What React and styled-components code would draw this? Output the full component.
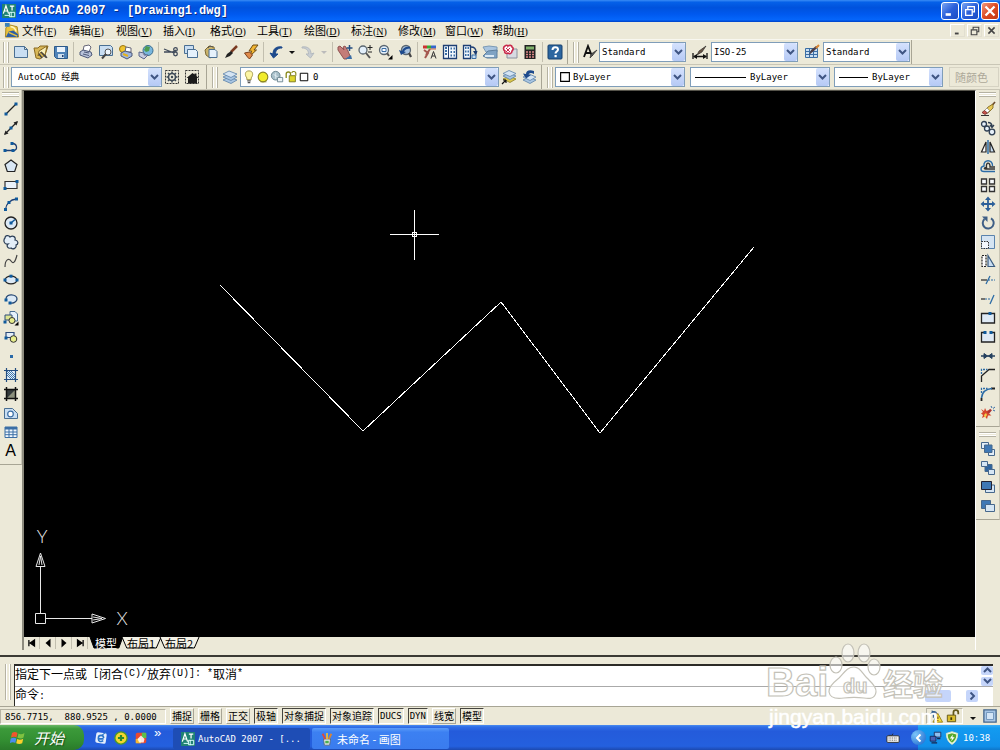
import React, { useState } from 'react';
import styled, { createGlobalStyle, css } from 'styled-components';

const MONO = '"DejaVu Sans Mono", "Noto Sans CJK SC", monospace';
const CJK = '"Liberation Mono", "Noto Sans CJK SC", monospace';

const GlobalStyle = createGlobalStyle`
  * {
    box-sizing: border-box;
  }
  body {
    margin: 0;
    background: #ece9d8;
    color: #000;
    font: 11px/14px ${CJK};
  }
  button, input, select {
    font: inherit;
    color: inherit;
    margin: 0;
    padding: 0;
    border: 0;
    background: none;
    border-radius: 0;
  }
`;

/* ---------- icons, all on a 16 x 16 grid ---------- */

const navy = '#1d3e73';
const steel = '#3b6ea5';
const pale = '#c9def2';

const line = { fill: 'none', stroke: navy, strokeWidth: 1.3 };
const thin = { fill: 'none', stroke: '#333', strokeWidth: 1 };

const dot = (x, y) => <rect x={x - 1.5} y={y - 1.5} width="3" height="3" fill="#0f5a9c" />;

const icons = {
  newFile: <path d="M1.5 2.5h10l3 3v8h-13z M11.5 2.5v3h3" fill={pale} stroke="#4a6f92" />,
  open: (
    <g>
      <path d="M1 4h4l2-2h8l-3 9-5 4-4-1z" fill="#d9b857" stroke="#8a6a22" />
      <path d="M5 12l1-5 8-5-2 9-4-3z" fill="#f9efb8" stroke="#8a6a22" />
      <path d="M8 8l5 5.500M6 10l3 4M12 11l2 3" stroke="#444" strokeWidth="1.300" />
    </g>
  ),
  save: (
    <g>
      <path d="M1.5 2.5h13v12h-11l-2-2z" fill="#4f83b8" stroke="#2d5a8a" />
      <path d="M4 3h8v5H4z" fill="#eaf3fb" />
      <path d="M5 10h6v4H5z" fill="#cfe0ef" />
      <path d="M9 11h1.500v2H9z" fill={navy} />
    </g>
  ),
  print: (
    <g>
      <path d="M5 7l1-5 5-1 2 2-2 5z" fill="#fff" stroke="#667" />
      <path d="M2 8l3-2 8 2 1 3-4 3-8-3z" fill="#b9c3da" stroke="#4d5878" />
      <path d="M5 10l6 1.500M6 8l5 1" stroke="#4d5878" />
    </g>
  ),
  preview: (
    <g>
      <path d="M1.5 1.500h11l2 2v8h-13z" fill={pale} stroke="#4a6f92" />
      <circle cx="10" cy="8" r="3" fill="#eef6fd" stroke="#555" />
      <path d="M8 10l-4 4.500" stroke="#444" strokeWidth="2" />
    </g>
  ),
  publish: (
    <g>
      <circle cx="5" cy="5" r="3.500" fill="#f0c42d" stroke="#9a7413" />
      <path d="M8 3l5 1v4l-6 0z" fill="#fff" stroke="#667" />
      <path d="M3 9l4-2 7 2v3l-5 3-6-3z" fill="#9fb5dc" stroke="#4d5878" />
      <path d="M5 10l5 2" stroke="#e4b21c" strokeWidth="2" />
    </g>
  ),
  globe: (
    <g>
      <circle cx="10" cy="6.500" r="5" fill="#79b6dd" stroke="#3b6d8f" />
      <path d="M8 2l4 1-1 4-3 1-2-2z" fill="#4d9c50" />
      <path d="M1 8l5 1v2l4 0-4 4-5-3z" fill="#c6cbe0" stroke="#5d678a" />
    </g>
  ),
  cut: (
    <g stroke="#3f4a5a" fill="none" strokeWidth="1.300">
      <path d="M1 5l10 4M1 8h9l3-2" />
      <circle cx="12.500" cy="5.500" r="1.800" />
      <circle cx="12.500" cy="10" r="1.800" />
    </g>
  ),
  copyClip: (
    <g fill={pale} stroke="#4a6f92">
      <path d="M1.500 1.500h9v8h-9z" />
      <path d="M4.500 5.500h8l2 2v6h-10z" fill="#e5f1fb" />
    </g>
  ),
  paste: (
    <g>
      <path d="M2 6l4-4 5 1 1 8-5 3-4-3z" fill="#c9b26b" stroke="#7d6a33" />
      <path d="M6 5.500h6l2 2v6H6z" fill="#e5f1fb" stroke="#4a6f92" />
      <path d="M5 4l2-2 3 1" stroke="#555" fill="none" />
    </g>
  ),
  brush: (
    <g>
      <path d="M14 2L8 8" stroke="#7a3b22" strokeWidth="2.500" />
      <path d="M8 7l2 2-3 3-5 2 2-4z" fill="#222" />
    </g>
  ),
  matchProp: (
    <g>
      <path d="M10 1l5 0-4 5 2.500 0L7 12l1.500-5H6z" fill="#f2b632" stroke="#6c4a12" />
      <path d="M1.500 9l5-1 3 3-3 4-2-2z" fill="#e08a4a" stroke="#7a3f1b" />
    </g>
  ),
  undo: <path d="M14 3C8 2 5 5 5 10l-3-1 3.500 5L10 10 7.500 10C7.500 6 10 4 14 4z" fill="#1d4a8c" stroke="#1d4a8c" />,
  redo: <path d="M2 3c6-1 9 2 9 7l3-1-3.500 5L6 10l2.500 0C8.500 6 6 4 2 4z" fill="#c8cdd2" stroke="#b4babf" />,
  pan: (
    <g>
      <path d="M1 3l2-1 4 4-1-3 2-1 3 5 2 5-3 3H7L1 6z" fill="#c47c78" stroke="#8f5351" />
      <path d="M12.500 1v6M9.500 4h6" stroke="#234d80" strokeWidth="1.500" />
      <path d="M8 15l6-4 1 4z" fill={steel} />
    </g>
  ),
  zoomRt: (
    <g>
      <circle cx="6" cy="6" r="4" fill="#e3effa" stroke="#5a6670" strokeWidth="1.300" />
      <path d="M9 9l4 5" stroke="#555" strokeWidth="2" />
      <path d="M13 1v5M10.500 3.500h5M11 8h4" stroke="#222" />
    </g>
  ),
  zoomWin: (
    <g>
      <circle cx="7" cy="6" r="4.500" fill="#e3effa" stroke="#5a6670" strokeWidth="1.300" />
      <path d="M5 4.500h4v3H5z" fill="#fff" stroke={steel} />
      <path d="M10 9l2 3" stroke="#555" strokeWidth="2" />
      <path d="M15.500 11v4.500H11z" fill="#000" />
    </g>
  ),
  zoomPrev: (
    <g>
      <circle cx="9" cy="6" r="4.500" fill="#a9c3df" stroke="#5a6670" strokeWidth="1.300" />
      <path d="M12 9l2 4" stroke="#444" strokeWidth="2.200" />
      <path d="M13 3C9 2 6 4 5 7L2 6l2 5 5-3-2-.5c1-2 3-3 6-3z" fill="#1d4a8c" />
    </g>
  ),
  properties: (
    <g>
      <path d="M1 1.500h4v3H1z" fill="#c33" />
      <path d="M5 1.500h4v3H5z" fill="#3a3" />
      <path d="M9 1.500h5v3H9z" fill="#36c" />
      <path d="M2 6l4 3-3 5M8 5l-4 6" stroke="#a4574e" strokeWidth="2" fill="none" />
      <path d="M9 14.500l2.500-7 2.500 7M10 12h3" stroke="#333" fill="none" />
      <path d="M8 5h6" stroke="#c64" />
    </g>
  ),
  designCenter: (
    <g>
      <path d="M1.500 1.500h13v13h-13z" fill="#f3f8fd" stroke={navy} strokeWidth="1.300" />
      <path d="M6.500 2v12" stroke={navy} />
      <path d="M3 4h2M3 7h2M3 10h2M8.500 4.500h1.500M11.500 4.500H13M8.500 8h1.500M11.500 8H13M8.500 11.500h1.500M11.500 11.500H13" stroke={steel} strokeWidth="2" />
    </g>
  ),
  toolPalettes: (
    <g>
      <path d="M1.500 1.500h7v13h-7z" fill="#f3f8fd" stroke={navy} strokeWidth="1.300" />
      <path d="M3 4h1.500M5.500 4H7M3 7.500h1.500M5.500 7.500H7M3 11h1.500M5.500 11H7" stroke={steel} strokeWidth="2" />
      <path d="M9 3c3 0 5 2 5 5" {...line} />
      <path d="M11 7l3 5 1.500-5z" fill={navy} />
      <path d="M10 11h4v3.500h-4z" fill={pale} stroke={steel} />
    </g>
  ),
  sheetSet: (
    <g>
      <path d="M1 3l6-1 8 1v5H4z" fill="#a9c5e0" stroke="#7b9ab5" />
      <path d="M1 12l5-5 9-1v8H5z" fill="#7fa3c4" stroke="#5f7f9d" />
      <path d="M3 12h9" stroke="#dceaf5" strokeWidth="2" />
    </g>
  ),
  markup: (
    <g>
      <path d="M5 5h10v9H5z" fill="#d7dbe2" stroke="#8a919d" />
      <path d="M3 2c1-1 3-1 3 0 1-1 4-1 4 1 2 1 1 3 0 4 0 3-3 3-4 2-2 1-4 0-3-2-2-1-2-4 0-5z" fill="#fff" stroke="#c92a4b" strokeWidth="1.600" />
      <path d="M4 4l4 4M8 4L4 8" stroke="#c92a4b" />
    </g>
  ),
  calc: (
    <g>
      <path d="M2.500 1h11v14h-11z" fill="#222" />
      <path d="M4 2.500h8v3H4z" fill="#7fb06a" />
      <path d="M4 8h8M4 10.500h8M4 13h8" stroke="#d88" strokeWidth="1.300" strokeDasharray="2 1" />
    </g>
  ),
  help: (
    <g>
      <rect x="1" y="1" width="14" height="14" rx="1" fill="#2c66a0" stroke="#17406e" />
      <path d="M5.500 6c0-4 5.500-3.500 5.500-.5 0 2-2.500 2-2.500 4" fill="none" stroke="#fff" strokeWidth="2" />
      <rect x="7.500" y="11" width="2.200" height="2.200" fill="#fff" />
    </g>
  ),
  textStyle: (
    <g>
      <path d="M2 13L6 2l4 10M3.500 9h5" fill="none" stroke="#111" strokeWidth="1.800" />
      <path d="M15 6l-4 5-3 3 1-4z" fill="#555" stroke="#222" strokeWidth=".6" />
    </g>
  ),
  dimStyle: (
    <g>
      <path d="M1 9v6M15 9v6M2 12.500h12" stroke="#111" strokeWidth="1.300" />
      <path d="M5 10l-4 2.500L5 15zM11 10l4 2.500-4 2.500z" fill="#111" />
      <path d="M14 2l-4 6-5 3 2-4z" fill="#6a5646" stroke="#222" strokeWidth=".6" />
    </g>
  ),
  tableStyle: (
    <g>
      <path d="M1.500 4.500h12v9h-12z" fill={pale} stroke={steel} />
      <path d="M1.500 7.500h12M1.500 10.500h12M5.500 4.500v9M9.500 4.500v9" stroke={steel} />
      <path d="M15 2l-4 4-6 5 2-5 5-4z" fill="#4b3f4a" />
      <path d="M15 1l-3 3" stroke="#d98633" strokeWidth="2" />
    </g>
  ),
  gear: (
    <g>
      <rect x="1.500" y="1.500" width="13" height="13" {...thin} strokeDasharray="2 1" />
      <circle cx="8" cy="8" r="3.500" fill="none" stroke="#3d4a57" strokeWidth="1.600" />
      <path d="M8 2.500v2M8 11.500v2M2.500 8h2M11.500 8h2M4 4l1.500 1.500M10.500 10.500L12 12M12 4l-1.500 1.500M5.500 10.500L4 12" stroke="#3d4a57" strokeWidth="1.500" />
      <circle cx="8" cy="8" r="1.200" fill="#3d4a57" />
    </g>
  ),
  home: (
    <g>
      <rect x="1.500" y="1.500" width="13" height="13" {...thin} strokeDasharray="2 1" />
      <path d="M2.500 9L8.500 4l2 1.500V4.500h2V7l2 2-1.500 0v5.500H4V9z" fill="#1a1a1a" />
    </g>
  ),
  layers: (
    <g fill="#a9c6e2" stroke="#5c82a8" strokeWidth=".8">
      <path d="M1 11l6-3 8 3-6 3.500z" />
      <path d="M1 8l6-3 8 3-6 3.500z" />
      <path d="M1 5l6-3 8 3-6 3.500z" fill="#d4e4f3" />
    </g>
  ),
  layerState: (
    <g strokeWidth=".8">
      <path d="M2 10l6-3 7 3-6 3.500z" fill="#d9c64c" stroke="#8b7d28" />
      <path d="M2 7l6-3 7 3-6 3.500z" fill="#a9c6e2" stroke="#5c82a8" />
      <path d="M2 4.500l6-3 7 3-6 3z" fill="#d4e4f3" stroke="#5c82a8" />
      <path d="M1 15l4-4M5 11v3M5 11H2" stroke="#111" strokeWidth="1.200" fill="none" />
    </g>
  ),
  layerPrev: (
    <g strokeWidth=".8">
      <path d="M2 11l6-3 7 3-6 3.500z" fill="#a9c6e2" stroke="#5c82a8" />
      <path d="M2 8l6-3 7 3-6 3.500z" fill="#d4e4f3" stroke="#5c82a8" />
      <path d="M13 2C8 0 5 2 5 5L2 4.500l3 5 5-3.500-2.500-.5C8 4 10 3 13 5z" fill="#1d4a8c" />
    </g>
  ),
  bulb: (
    <g>
      <path d="M8 1c-5 0-5 5-2.500 8v2h5V9C13 6 13 1 8 1z" fill="#fdf6a4" stroke="#9a8f3d" />
      <path d="M6 12.500h4M6.500 14.500h3" stroke="#555" strokeWidth="1.300" />
    </g>
  ),
  sun: (
    <g>
      <circle cx="8" cy="8" r="5.500" fill="#f1ec2b" stroke="#8b8520" strokeWidth="1.300" />
      <path d="M5 13.500h7" stroke="#8b8520" />
    </g>
  ),
  freeze: (
    <g>
      <circle cx="6.500" cy="6.500" r="5" fill="#a8bfc9" stroke="#66808c" />
      <path d="M8.500 8.500h6v5h-6z" fill="#eef4f8" stroke="#66808c" />
      <path d="M4 5l5 3M6.500 3v7" stroke="#e4eef3" />
    </g>
  ),
  unlock: (
    <g>
      <path d="M2.500 9V4.500c0-3 5-3 5 0V6" fill="none" stroke="#8a8a1d" strokeWidth="1.500" />
      <path d="M6 6.500h7v7H6z" fill="#ddd62c" stroke="#77741b" />
      <path d="M9 3.500c0-3 5-2 4.500 1v2" fill="none" stroke="#8a8a1d" strokeWidth="1.300" />
    </g>
  ),
  swatch: <path d="M3 3h10v10H3z" fill="#fff" stroke="#000" strokeWidth="1.300" />,

  /* draw toolbar */
  line: <g><path d="M3 13L13 3" stroke="#222" strokeWidth="1.300" />{dot(3, 13)}{dot(13, 3)}</g>,
  xline: (
    <g>
      <path d="M2 14L14 2" stroke="#222" strokeWidth="1.300" />
      <path d="M1 15l1.500-4.500L5.500 13.500zM15 1l-4.500 1.500L13.500 5.500z" fill="#222" />
      {dot(8, 8)}
    </g>
  ),
  pline: <g><path d="M2 11.500h9c4-1 3-7-1.500-7" {...line} />{dot(2, 11.500)}{dot(10, 11.500)}{dot(9, 4.500)}</g>,
  polygon: <path d="M8 2l6 4.500-2.300 7H4.300L2 6.500z" fill="#d9e7f4" stroke="#222" strokeWidth="1.200" />,
  rect: <g><path d="M2 4.500h12v7H2z" fill="#eaf2fa" stroke="#333" strokeWidth="1.200" />{dot(2, 11.500)}{dot(14, 4.500)}</g>,
  arc: <g><path d="M2.500 13.500C3 8 7 3.500 13.500 3" {...line} />{dot(2.500, 13.500)}{dot(6, 6.500)}{dot(13.500, 3)}</g>,
  circle: (
    <g>
      <circle cx="8" cy="8" r="6" fill="#dce9f5" stroke="#222" strokeWidth="1.300" />
      <path d="M8 8l4-3.500" stroke="#0f5a9c" strokeWidth="1.500" />
      {dot(8, 8)}
    </g>
  ),
  cloud: <path d="M2 4c0-3 4-3 5-1 3-2 6 0 5 3 3 0 4 4 1 5 1 3-3 5-5 3-3 1-5-2-3-4-4 1-5-4-3-6z" fill="#e3eef8" stroke="#2a3d55" strokeWidth="1.200" />,
  spline: <path d="M2 14c0-8 4-9 6-6s4 2 6-6" fill="none" stroke="#444" strokeWidth="1.200" />,
  ellipse: (
    <g>
      <ellipse cx="8" cy="8" rx="6" ry="3.800" fill="#dce9f5" stroke="#222" strokeWidth="1.200" />
      {dot(2, 8)}{dot(14, 8)}{dot(8, 4.200)}
    </g>
  ),
  ellipseArc: <g><path d="M3 8c0-6 11-5 11 0 0 3-4 4.500-7 4" fill="#dce9f5" stroke="#2a4a74" strokeWidth="1.300" />{dot(3, 9)}{dot(7, 12)}</g>,
  insertBlock: (
    <g>
      <path d="M7 1.500h5l2.500 2.500v7H7z" fill="#e5f1fb" stroke="#4a6f92" />
      <path d="M2 5h7v5H2z" fill="#dfe690" stroke="#2e4c7a" />
      <circle cx="9" cy="10.500" r="3" fill="#e8ee8c" stroke="#333" />
      {dot(2, 12)}
      <path d="M15.500 11.500v4H11.500z" fill="#000" />
    </g>
  ),
  makeBlock: (
    <g>
      <path d="M3 3.500h8v5H3z" fill="#e3eef8" stroke="#2e4c7a" strokeWidth="1.200" />
      <circle cx="10.500" cy="10" r="3.300" fill="#e8ee8c" stroke="#333" />
      {dot(3, 9)}
    </g>
  ),
  point: <rect x="7" y="7" width="3" height="3" fill="#2a6aa8" />,
  hatch: (
    <g>
      <path d="M3.500 3.500h9v9h-9z" fill="#e8f1fa" />
      <path d="M4 8l4 4M4 4l8 8M8 4l4 4M4 6l6 6M6 4l6 6" stroke="#2c6ca6" strokeWidth=".9" />
      <path d="M3.500 1v14M12.500 1v14M1 3.500h14M1 12.500h14" stroke="#234d80" strokeWidth="1.200" />
    </g>
  ),
  gradient: (
    <g>
      <path d="M3.500 3.500h9v9h-9z" fill="#8b8f7c" />
      <path d="M3.500 12.500v-9h9z" fill="#343a3c" />
      <path d="M3.500 1v14M12.500 1v14M1 3.500h14M1 12.500h14" stroke="#111" strokeWidth="1.500" />
    </g>
  ),
  region: (
    <g>
      <path d="M1.500 3.500h8l5 5v5h-13z" fill={pale} stroke="#4a6f92" />
      <circle cx="7.500" cy="9" r="2.800" fill="#fff" stroke={steel} strokeWidth="1.200" />
    </g>
  ),
  table: (
    <g>
      <path d="M2 3h12v10.500H2z" fill="#f1f7fd" stroke={steel} />
      <path d="M2 3h12v2.500H2z" fill={steel} />
      <path d="M2 8h12M2 10.700h12M6 5v8.500M10 5v8.500" stroke={steel} />
    </g>
  ),

  /* modify toolbar */
  erase: (
    <g>
      <path d="M15 1L9 8" stroke="#6b4a2b" strokeWidth="1.600" />
      <path d="M13 3L8 6l-3 4 3 2 5-5z" fill="#e8c957" stroke="#77611c" strokeWidth=".8" />
      <path d="M7 7l-3 3 3 2.500 2.500-3z" fill="#fff" stroke="#777" strokeWidth=".6" />
      <path d="M4.500 9.500L2 11.500l3 2L7.500 12z" fill="#c9514a" stroke="#6d2b27" strokeWidth=".8" />
      <path d="M1 14.500h8" stroke="#333" />
    </g>
  ),
  copy: (
    <g fill="#e6f0f9" stroke="#2f3f52" strokeWidth="1.300">
      <circle cx="4" cy="4" r="2.500" />
      <circle cx="7" cy="8.500" r="2.500" />
      <circle cx="12" cy="12" r="2.800" />
      <path d="M8 2.500c3 0 4 1 4 4M10 5l2 2.500L14 5" fill="none" />
    </g>
  ),
  mirror: (
    <g>
      <path d="M6 3v10H1.500z" fill="#fff" stroke="#222" strokeWidth="1.200" />
      <path d="M10 3v10h4.500z" fill={pale} stroke="#222" strokeWidth="1.200" />
      <path d="M8 1v14" stroke="#2c6ca6" strokeWidth="1.500" />
    </g>
  ),
  offset: (
    <g fill="none" strokeWidth="1.400">
      <path d="M15 13.500H4c-4 0-4-5 0-5.500C3 1 13 1 12.500 8" stroke="#2c6ca6" />
      <path d="M15 11H5.500c-2 0-1-1.500 1-1.500-1-6 4-5.500 3.500-.5h5" stroke="#333" />
    </g>
  ),
  array: (
    <g fill="#f8fbfe" strokeWidth="1.300">
      <path d="M1.500 2h5v5h-5zM9.500 2h5v5h-5zM9.500 9.500h5v5h-5zM1.500 9.500h5v5h-5z" stroke="#333" />
    </g>
  ),
  move: (
    <g>
      <path d="M8 2v12M2 8h12" stroke="#2c5f99" strokeWidth="1.800" />
      <path d="M8 .5l3 3.500H5zM8 15.500l3-3.500H5zM.5 8L4 5v6zM15.500 8L12 5v6z" fill="#2c5f99" />
    </g>
  ),
  rotate: (
    <g>
      <path d="M4.500 4A5.500 5.500 0 1 0 11 3.300" fill="none" stroke="#3f5f86" strokeWidth="2" />
      <path d="M2 1.500h5.500V7z" fill="#3f5f86" />
    </g>
  ),
  scale: (
    <g>
      <path d="M1.500 1.500h13v13h-13z" fill="#d5e4f2" stroke="#5a83ad" />
      <path d="M1.500 7.500h7v7h-7z" fill="#f3f8fd" stroke="#333" strokeDasharray="1.500 1" />
    </g>
  ),
  stretch: (
    <g>
      <path d="M2 2.500h4v11H2z" fill="#fff" stroke="#222" strokeWidth="1.200" strokeDasharray="2 1" />
      <path d="M8 2.500l6.500 11H8z" fill={pale} stroke="#3a5b80" strokeWidth="1.200" />
    </g>
  ),
  trim: (
    <g>
      <path d="M1 8h6" stroke="#333" strokeWidth="1.300" />
      <path d="M8 8h7" stroke="#2c6ca6" strokeDasharray="2 1" />
      <path d="M6 12l4-8" stroke="#2c6ca6" strokeWidth="1.300" />
    </g>
  ),
  extend: (
    <g>
      <path d="M1 8h4" stroke="#333" strokeWidth="1.300" />
      <path d="M5 8h6" stroke="#2c6ca6" strokeDasharray="2 1" />
      <path d="M10 13l4-9" stroke="#2c6ca6" strokeWidth="1.300" />
    </g>
  ),
  breakPoint: <g><path d="M1.500 3.500h13v9.500h-13z" fill="#dfeaf5" stroke="#222" strokeWidth="1.300" />{dot(10, 3.500)}</g>,
  breakTwo: <g><path d="M4 3.500H1.500V13h13V3.500H12" fill="#dfeaf5" stroke="#222" strokeWidth="1.300" />{dot(5, 3.500)}{dot(11, 3.500)}</g>,
  join: (
    <g fill="#26415f" stroke="#26415f">
      <path d="M1 8h14" strokeWidth="1.500" />
      <path d="M4 5.500L7.500 8 4 10.500zM12 5.500L8.500 8l3.500 2.500z" />
    </g>
  ),
  chamfer: (
    <g fill="none" strokeWidth="1.300">
      <path d="M1.500 15V9L9 2.500h6" stroke="#222" />
      <path d="M1.500 7V2.500h6" stroke="#2c6ca6" strokeDasharray="2 1" />
    </g>
  ),
  fillet: (
    <g fill="none" strokeWidth="1.300">
      <path d="M1.500 15v-3M11 2.500h4" stroke="#222" strokeWidth="1.800" />
      <path d="M1.500 12C2 6 6 3 12 2.500" stroke="#2c6ca6" strokeWidth="1.600" />
      <path d="M1.500 7V2.500h6" stroke="#2c6ca6" strokeDasharray="2 1" />
    </g>
  ),
  explode: (
    <g>
      <path d="M1 4l3 2 1-3 1.500 3L9 5 8.500 8l3 2.500-3.500 0-1 3.500-2-2.500-3 1.500L3 10 1 8.500 3 7z" fill="#d6452c" />
      <path d="M4 10l2-2 1 2-2 3z" fill="#f3d44a" />
      <path d="M8 8l3-3.500" stroke="#a33" strokeWidth="2.500" />
      <path d="M11 1l1 2M15 2l-2 1.500M15 6l-2-1" stroke={steel} />
    </g>
  ),
  front: (
    <g stroke="#47688c">
      <path d="M1.500 1.500h7v6h-7zM8.500 8.500h6v6h-6z" fill="#e3eef8" />
      <path d="M4.500 4h7.500v7.500H4.500z" fill="#3f78b5" />
    </g>
  ),
  back: (
    <g stroke="#47688c">
      <path d="M5 4.500h7v7H5z" fill="#2f65a0" />
      <path d="M1.500 1.500h6v5h-6zM8.500 9.500h6v5h-6z" fill="#d6e6f4" />
    </g>
  ),
  above: (
    <g stroke="#47688c">
      <path d="M5.500 6h9v7.500h-9z" fill="#d6e6f4" />
      <path d="M1.500 2.500h10v8h-10z" fill="#3f78b5" stroke="#223" />
    </g>
  ),
  under: (
    <g stroke="#47688c">
      <path d="M1.500 2.500h9v8h-9z" fill="#3f78b5" />
      <path d="M5.500 6.500h9v7h-9z" fill="#d6e6f4" />
    </g>
  ),

  /* window and desktop */
  app: (
    <g>
      <rect width="16" height="16" fill="#1f8274" />
      <path d="M1.500 11L4.500 2l3 9M3 8h3M9 2.500h5M11.500 2.500v5" fill="none" stroke="#fff" strokeWidth="1.400" />
      <path d="M8.500 9.500h6v5h-6zM10.500 9v6M3 13h5" fill="none" stroke="#dff" strokeWidth="1.100" />
    </g>
  ),
  drawing: (
    <g>
      <path d="M2 5l4-3 8 2 1.500 11H1.500z" fill="#e9c33e" stroke="#a58420" />
      <path d="M2 15l3-6 5-1 5 4v3z" fill="#2d5fa5" />
      <path d="M5 10l9 4" stroke="#e9c33e" strokeWidth="1.500" />
      <path d="M1 0h5v4H1z" fill="#3d82b8" />
      <path d="M7 4c3 0 5 2 6 5" stroke="#fff6c4" strokeWidth="1.500" fill="none" />
    </g>
  ),
  min: <path d="M3 12h6" stroke="currentColor" strokeWidth="3" />,
  restore: (
    <g fill="none" stroke="currentColor" strokeWidth="1.500">
      <path d="M5.500 6V3h7.500v6h-2.500" />
      <path d="M3 6.500h7.500V13H3z" />
    </g>
  ),
  close: <path d="M3.500 3.500l9 9M12.500 3.500l-9 9" stroke="currentColor" strokeWidth="2.300" />,
  first: <path d="M3 3v10M12 3v10L5 8z" stroke="#000" strokeWidth="2" fill="#000" />,
  prev: <path d="M12 1v14L4 8z" />,
  next: <path d="M4 1v14l8-7z" />,
  last: <path d="M13 3v10M4 3v10l7-5z" stroke="#000" strokeWidth="2" fill="#000" />,
  ie: (
    <g>
      <rect x="2" y="2" width="12" height="12" rx="2" fill="#e5eefc" transform="rotate(8 8 8)" />
      <path d="M11 9H5c0 3 3 4 5.500 2M5 8c0-4 6-4 6 0" fill="none" stroke="#2b74c9" strokeWidth="1.800" />
      <path d="M9 5l5-4" stroke="#2b74c9" strokeWidth="1.300" />
    </g>
  ),
  plusBall: (
    <g>
      <circle cx="8" cy="8" r="7" fill="#f4d62f" stroke="#4e9a28" strokeWidth="1.500" />
      <path d="M8 4.500v7M4.500 8h7" stroke="#2b8b2e" strokeWidth="2.500" />
    </g>
  ),
  quad: (
    <g>
      <rect x="2" y="2" width="12" height="12" rx="2" fill="#e8492f" />
      <path d="M2 9h6v5H2z" fill="#f5b832" />
      <path d="M9 2h5v6H9z" fill="#5fc04a" />
      <path d="M4 9l4-4 4 4-1 4H6z" fill="#fff" opacity=".85" />
    </g>
  ),
  flag: (
    <g>
      <path d="M2 3c2-1.500 4-1 5.500 0L6.500 7.500C5 6.500 3 6.500 1 7.500z" fill="#f0562d" />
      <path d="M8.500 3.500C10 4.500 12 4.500 14.500 3l-1 4.500C11.500 9 9.500 8.500 7.500 7.800z" fill="#7fc241" />
      <path d="M.8 8.500c2-1.200 4-1 5.500 0L5.300 13C4 12 2 12-.2 13z" fill="#4a8df0" />
      <path d="M7.200 9c2 1 4 1 6-.3l-1 4.500C10 14.500 8 14 6.200 13.300z" fill="#fbcf2c" />
    </g>
  ),
  paint: (
    <g>
      <path d="M4 8h8l-1 7H5z" fill="#e9eef2" stroke="#567" />
      <path d="M6 8L3 2" stroke="#e04a3a" strokeWidth="2" />
      <path d="M8 8V1" stroke="#f0c030" strokeWidth="2" />
      <path d="M10 8l3-6" stroke="#d98633" strokeWidth="2" />
      <path d="M6 10h4v3H6z" fill="#4cae4f" />
    </g>
  ),
  keyboard: (
    <g>
      <path d="M3 5h4l1-2" stroke="#222" fill="none" />
      <rect x="1" y="5.500" width="14" height="7.500" rx="1" fill="#f2f2f2" stroke="#222" />
      <path d="M3 8h10M3 10.500h10" stroke="#444" strokeDasharray="1 1" />
    </g>
  ),
  network: (
    <g stroke="#16234f">
      <path d="M6.500 1.500h8v6h-8z" fill="#8fc0f0" />
      <path d="M1.500 6.500h7v6h-7z" fill="#4a62b5" />
      <path d="M3 14.500h7M10 9.500h4" strokeWidth="1.500" />
    </g>
  ),
  shield: (
    <g>
      <path d="M8 .8l6.500 2C14.500 9 12 13 8 15.300 4 13 1.500 9 1.500 2.800z" fill="#f4fbe8" stroke="#d8e6c0" />
      <path d="M8 2.500l5 1.500c0 4.500-2 7.500-5 9.500-3-2-5-5-5-9.500z" fill="#57a92c" />
      <path d="M9 4L5.500 8.500H8L7 12l4-5H8.500z" fill="#fff" />
    </g>
  ),
  warn: (
    <g>
      <path d="M3 2l5 4M2 6c2-4 6-4 7 0M5 3v7" stroke="#36608f" strokeWidth="1.300" fill="none" />
      <path d="M10 5l5.500 10h-11z" fill="#f3dc3a" stroke="#927d12" />
      <path d="M10 8.500v3M10 12.500v1.200" stroke="#222" strokeWidth="1.300" />
    </g>
  ),
  padlock: (
    <g>
      <path d="M8.500 7V4c0-3.500 5.500-3.500 5.500 0v2" fill="none" stroke="#63581b" strokeWidth="2" />
      <path d="M1.500 7h9.500v7.500H1.500z" fill="#d9bd2e" stroke="#5e5114" />
      <path d="M6 9.500v3" stroke="#3c330b" strokeWidth="2" />
    </g>
  ),
  clean: (
    <g>
      <path d="M1 1h14v14H1z" fill="#a8c6e6" stroke="#44658a" strokeWidth="1.500" />
      <path d="M4 4h8v8H4z" fill="#d4e5f6" stroke="#6d91b8" />
    </g>
  ),
};

const Svg = styled.svg`
  display: block;
  flex: none;
  width: ${(p) => p.$size}px;
  height: ${(p) => p.$size}px;
`;

function Icon({ name, size = 16 }) {
  return (
    <Svg viewBox="0 0 16 16" $size={size} aria-hidden="true">
      {icons[name]}
    </Svg>
  );
}

/* ---------- frame ---------- */

const Desktop = styled.div`
  position: relative;
  display: flex;
  flex-direction: column;
  height: 100vh;
  overflow: hidden;
`;

const TitleBar = styled.header`
  display: flex;
  align-items: center;
  height: 22px;
  padding: 0 1px 0 2px;
  background: linear-gradient(#3a8cf5 0, #0560e8 10%, #0052dd 35%, #0059ef 65%, #0566fb 90%, #0040c4 100%);
  color: #fff;
`;

const Title = styled.h1`
  flex: 1;
  margin: 0 0 0 3px;
  font: bold 12px/16px "Liberation Mono", monospace;
  text-shadow: 1px 1px 0 #0a2f8a;
`;

const CaptionButton = styled.button`
  display: flex;
  align-items: center;
  justify-content: center;
  width: 18px;
  height: 18px;
  margin-left: 2px;
  border: 1px solid #fff;
  border-radius: 3px;
  color: #fff;
  background: ${(p) => (p.$danger
    ? 'linear-gradient(135deg, #f09a80, #dd4a22 50%, #c23a12)'
    : 'linear-gradient(135deg, #7ba5f2, #2a60da 50%, #1c4cc4)')};
`;

const MenuBar = styled.nav`
  display: flex;
  align-items: center;
  height: 18px;
  padding: 0 1px 0 4px;
  border-bottom: 1px solid #f8f7f0;
`;

const MenuItem = styled.button`
  width: 47px;
  text-align: left;
  font: 11px/16px "Noto Sans CJK SC", sans-serif;
  white-space: nowrap;

  &:first-of-type {
    margin-left: 3px;
  }
  small {
    font: 10px/16px "Liberation Serif", serif;
  }
`;

const Spacer = styled.span`
  flex: 1;
`;

const MdiButton = styled.button`
  display: flex;
  align-items: center;
  justify-content: center;
  width: 15px;
  height: 13px;
  margin-left: 2px;
  color: #444;
  border: 1px solid;
  border-color: #fff #e2dfd0 #e2dfd0 #fff;
`;

/* ---------- toolbars ---------- */

const ToolRow = styled.div`
  display: flex;
  height: ${(p) => p.$height}px;
  border-bottom: 1px solid #c9c6b6;
`;

const Toolbar = styled.div`
  display: flex;
  align-items: center;
  flex: ${(p) => (p.$grow ? 1 : 'none')};
  padding: 0 ${(p) => p.$end || 0}px 0 3px;
  border-right: 1px solid ${(p) => (p.$grow ? 'transparent' : '#a8a595')};
  margin-right: ${(p) => (p.$grow ? 0 : 2)}px;
  overflow: hidden;
`;

const Grip = styled.span`
  flex: none;
  width: 6px;
  height: 21px;
  margin-right: 2px;
  border: solid #b5b2a2;
  border-width: 0 1px;
  box-shadow: inset 1px 0 #fff, inset -1px 0 #fff;

  ${(p) => p.$flat && css`
    width: 17px;
    height: 5px;
    margin: 2px 0;
    border-width: 1px 0;
    box-shadow: inset 0 1px #fff, inset 0 -1px #fff;
  `}
`;

const ToolButton = styled.button`
  display: flex;
  align-items: center;
  justify-content: center;
  flex: none;
  width: ${(p) => p.$width || 20}px;
  height: ${(p) => p.$height || 22}px;
  font: 16px/19px "Liberation Sans", sans-serif;

  &:hover {
    background: #f6f4ea;
  }
`;

const Rule = styled.span`
  flex: none;
  width: 1px;
  height: 20px;
  margin: 0 2px;
  background: #c2bfaf;
`;

const Caret = styled.span`
  border: ${(p) => p.$size || 3}px solid transparent;
  border-top-color: ${(p) => p.$color || '#111'};
  border-bottom: 0;
`;

const ComboBox = styled.label`
  display: flex;
  align-items: center;
  flex: none;
  width: ${(p) => p.$width}px;
  height: 20px;
  padding-left: ${(p) => p.$indent || 2}px;
  margin-right: ${(p) => p.$gap || 0}px;
  border: 1px solid #7f9db9;
  background: #fff;
`;

const ComboSelect = styled.select`
  appearance: none;
  flex: 1;
  min-width: 0;
  height: 18px;
  padding-left: ${(p) => p.$indent || 0}px;
  font: 9px/18px ${MONO};
  outline: 0;
`;

const ComboArrow = styled.span`
  display: flex;
  align-items: center;
  justify-content: center;
  width: 13px;
  height: 18px;
  border-radius: 2px;
  background: linear-gradient(#d5e2fd, #b5c9f5);
`;

const LineSample = styled.span`
  flex: none;
  width: ${(p) => p.$width}px;
  height: 1px;
  background: #000;
`;

const Chevron = () => (
  <svg width="9" height="6" viewBox="0 0 9 6" aria-hidden="true">
    <path d="M1 1l3.500 3.500L8 1" fill="none" stroke="#3f5583" strokeWidth="2" />
  </svg>
);

const PlotStyle = styled.button`
  flex: 1;
  height: 20px;
  margin-left: 3px;
  padding-left: 5px;
  text-align: left;
  white-space: nowrap;
  color: #aca899;
  font: 11px/18px "Noto Sans CJK SC", sans-serif;
  border: 1px solid #d6d3c3;
`;

function Combo({ label, options, width, indent, gap, textIndent, children }) {
  return (
    <ComboBox $width={width} $indent={indent} $gap={gap}>
      {children}
      <ComboSelect aria-label={label} $indent={textIndent}>
        {options.map((o) => <option key={o}>{o}</option>)}
      </ComboSelect>
      <ComboArrow><Chevron /></ComboArrow>
    </ComboBox>
  );
}

const Tool = ({ name, ...rest }) => (
  <ToolButton aria-label={name} {...rest}><Icon name={name} /></ToolButton>
);

/* ---------- middle area ---------- */

const Middle = styled.main`
  display: flex;
  flex: 1;
  min-height: 0;
`;

const SideColumn = styled.aside`
  display: flex;
  flex-direction: column;
  flex: none;
  width: ${(p) => p.$width}px;
`;

const SideBar = styled.div`
  display: flex;
  flex-direction: column;
  align-items: center;
  padding-bottom: 4px;
  border-right: 1px solid #c9c6b6;
  border-bottom: 1px solid #a8a595;
  margin-bottom: 3px;
`;

const Center = styled.section`
  display: flex;
  flex-direction: column;
  flex: 1;
  min-width: 0;
  border-left: 2px solid #8d8b7e;
  border-top: 1px solid #55534a;
  border-right: 1px solid #fff;
`;

const Model = styled.div`
  flex: 1;
  min-height: 0;
  background: #000;

  svg {
    display: block;
    width: 100%;
    height: 100%;
  }
`;

const TabStrip = styled.div`
  display: flex;
  flex: none;
  height: 13px;
`;

const TabNav = styled.button`
  display: flex;
  align-items: center;
  justify-content: center;
  width: 16px;
  height: 12px;
  border-right: 1px solid #c2bfaf;
`;

const Tab = styled.button`
  position: relative;
  height: 12px;
  margin-left: ${(p) => (p.$active ? 2 : 0)}px;
  padding: 0 5px;
  font: 11px/12px "Noto Sans CJK SC", sans-serif;
  color: ${(p) => (p.$active ? '#fff' : '#000')};
  isolation: isolate;

  /* slanted tab body */
  svg {
    position: absolute;
    inset: 0;
    width: 100%;
    height: 100%;
    z-index: -1;
    overflow: visible;
    fill: ${(p) => (p.$active ? '#000' : '#f3f1e6')};
    stroke: #000;
  }
`;

/* ---------- command window ---------- */

const CommandWindow = styled.section`
  display: flex;
  flex: none;
  margin-top: 5px;
  border-top: 2px solid #3b3a34;
  height: 51px;
  padding: 7px 7px 0 5px;
`;

const CommandGrip = styled(Grip)`
  height: 36px;
  margin: 0 3px 0 0;
`;

const CommandBody = styled.div`
  flex: 1;
  display: flex;
  flex-direction: column;
  border-top: 2px solid #2c2b27;
  border-left: 1px solid #2c2b27;
  background: #fff;
  font: 10px/18px ${CJK};
`;

const CommandRow = styled.div`
  display: flex;
  align-items: center;
  height: ${(p) => p.$height}px;
  padding-bottom: ${(p) => (p.$line ? 5 : 0)}px;
  border-bottom: 1px solid ${(p) => (p.$line ? '#aaa' : '#fff')};
  white-space: pre;

  b {
    font: 12px/16px "Noto Sans CJK SC", sans-serif;
  }
  input {
    flex: 1;
    min-width: 0;
    outline: 0;
  }
`;

const ScrollButton = styled.button`
  display: flex;
  align-items: center;
  justify-content: center;
  width: 12px;
  height: ${(p) => p.$height || 9}px;
  border-radius: 2px;
  background: #c5d5fa;

  svg {
    transform: rotate(${(p) => p.$turn || 0}deg);
  }
`;

const ScrollColumn = styled.span`
  display: flex;
  flex-direction: column;
  gap: 2px;
  padding-top: 4px;
`;

const ScrollLine = styled.span`
  display: flex;
  gap: 15px;
  margin-right: 15px;
`;

const ScrollThumb = styled.span`
  width: 26px;
  height: 12px;
  border-radius: 2px;
  background: #c5d5fa;
`;

/* ---------- status bar ---------- */

const StatusBar = styled.footer`
  display: flex;
  align-items: center;
  flex: none;
  gap: 4px;
  height: 19px;
  padding: 0 3px 0 0;
  border-top: 1px solid #a8a595;
`;

const Coords = styled.output`
  width: 166px;
  height: 15px;
  padding-left: 4px;
  border: 1px solid;
  border-color: #b5b2a2 #fff #fff #b5b2a2;
  font: 9px/14px ${MONO};
  white-space: pre;
`;

const Toggle = styled.button`
  height: 16px;
  padding: 0 1px;
  font: ${(p) => (p.$latin ? `9px/14px ${MONO}` : '10px/14px "Noto Sans CJK SC", sans-serif')};
  border: 1px solid;
  border-color: ${(p) => (p.$on ? '#45443e #fff #fff #45443e' : '#fff #a8a595 #a8a595 #fff')};
`;

const StatusTray = styled.span`
  display: flex;
  align-items: center;
  gap: 3px;
  height: 16px;
  padding: 0 2px;
  border: 1px solid;
  border-color: #b5b2a2 #fff #fff #b5b2a2;
`;

const TrayMenu = styled.button`
  width: 12px;
  display: flex;
  justify-content: center;
  padding-top: 4px;
`;

/* ---------- taskbar ---------- */

const TaskBar = styled.div`
  display: flex;
  flex: none;
  height: 25px;
  color: #fff;
  background: linear-gradient(#4b8df0 0, #2f6de6 8%, #245bdb 25%, #2460de 85%, #1c49b0 100%);
`;

const StartButton = styled.button`
  display: flex;
  align-items: center;
  gap: 8px;
  width: 84px;
  padding-left: 10px;
  font: italic 15px/22px "Noto Sans CJK SC", sans-serif;
  text-shadow: 1px 1px 1px #1c4f1a;
  border-radius: 0 10px 10px 0;
  background: linear-gradient(#6cb868 0, #3c9a3a 15%, #338f32 60%, #2a7a2a 100%);
`;

const QuickLaunch = styled.div`
  display: flex;
  align-items: center;
  gap: 6px;
  width: 89px;
  padding-left: 10px;

  span {
    align-self: flex-start;
    font: 13px/16px "Liberation Sans", sans-serif;
  }
`;

const TaskButton = styled.button`
  display: flex;
  align-items: center;
  gap: 3px;
  width: 137px;
  height: 21px;
  margin: 3px 2px 0 0;
  padding-left: 8px;
  border-radius: 2px;
  font: 9px/18px ${MONO};
  white-space: pre;
  background: ${(p) => (p.$active ? '#1e4db5' : 'linear-gradient(#5a9bf8, #3c80f2 20%, #3a7cee)')};

  b {
    font: 11px/18px "Noto Sans CJK SC", sans-serif;
  }
`;

const SystemTray = styled.div`
  display: flex;
  align-items: center;
  gap: 3px;
  width: 82px;
  font: 9px/18px ${MONO};
  background: linear-gradient(#3db0f8 0, #139bf0 12%, #118fea 85%, #0f76c8 100%);

  time {
    margin-left: 1px;
  }
`;

const TrayToggle = styled.button`
  display: flex;
  align-items: center;
  justify-content: center;
  width: 15px;
  height: 15px;
  margin-left: -7px;
  border-radius: 50%;
  background: radial-gradient(circle at 30% 30%, #7cc4f8, #1763cc);

  svg {
    transform: rotate(90deg);
  }
  path {
    stroke: #fff;
  }
`;

const Ime = styled.button`
  margin: 0 18px 0 0;
`;

const Watermark = styled.svg`
  position: absolute;
  right: 50px;
  bottom: 20px;
  width: 184px;
  height: 90px;
  pointer-events: none;
`;

const menus = [
  ['文件', 'F'], ['编辑', 'E'], ['视图', 'V'], ['插入', 'I'], ['格式', 'O'], ['工具', 'T'],
  ['绘图', 'D'], ['标注', 'N'], ['修改', 'M'], ['窗口', 'W'], ['帮助', 'H'],
];

const drawTools = [
  'line', 'xline', 'pline', 'polygon', 'rect', 'arc', 'circle', 'cloud', 'spline', 'ellipse',
  'ellipseArc', 'insertBlock', 'makeBlock', 'point', 'hatch', 'gradient', 'region', 'table',
];

const modifyTools = [
  'erase', 'copy', 'mirror', 'offset', 'array', 'move', 'rotate', 'scale', 'stretch',
  'trim', 'extend', 'breakPoint', 'breakTwo', 'join', 'chamfer', 'fillet', 'explode',
];

const standardTools = [
  ['newFile', 'open', 'save'],
  ['print', 'preview', 'publish', 'globe'],
  ['cut', 'copyClip', 'paste', 'brush', 'matchProp'],
];

const viewTools = [
  ['pan', 'zoomRt', 'zoomWin', 'zoomPrev'],
  ['properties', 'designCenter', 'toolPalettes', 'sheetSet', 'markup', 'calc'],
];

const toggleList = [
  ['捕捉', false], ['栅格', false], ['正交', false], ['极轴', true], ['对象捕捉', true],
  ['对象追踪', true], ['DUCS', true], ['DYN', true], ['线宽', false], ['模型', true],
];

const layouts = ['模型', '布局1', '布局2'];

function ModelSpace() {
  return (
    <Model>
      <svg viewBox="0 0 951 546" preserveAspectRatio="xMinYMax meet" role="img" aria-label="Drawing1">
        <g fill="none" stroke="#fff" shapeRendering="crispEdges">
          <polyline points="196,194 339,340 477,211 576,342 730,156" />
          <path d="M366 143.500h49M390.500 119v50" />
          <path d="M388.500 141.500h4v4h-4z" />
        </g>
        <g fill="none" stroke="#e8e8e8">
          <path d="M11.500 522.500h10v10h-10zM16.500 522v-47M22 527.500h46" />
          <path d="M16.500 462l-4.500 13.500h9zM15 474l1.500-9 1.500 9M81.500 527.500l-13.500-4.500v9zM69 526l9 1.500-9 1.500" />
        </g>
        <g fill="#e8e8e8" fontFamily="Lato, sans-serif" fontWeight="300" fontSize="18" textAnchor="middle">
          <text x="18" y="452">Y</text>
          <text x="98" y="534">X</text>
        </g>
      </svg>
    </Model>
  );
}

export default function App() {
  const [toggles, setToggles] = useState(toggleList);
  const [layout, setLayout] = useState('模型');
  const [command, setCommand] = useState('');

  const flip = (name) => {
    setToggles(toggles.map(([n, on]) => [n, n === name ? !on : on]));
  };

  return (
    <Desktop>
      <GlobalStyle />
      <TitleBar>
        <Icon name="app" size={14} />
        <Title>AutoCAD 2007 - [Drawing1.dwg]</Title>
        <CaptionButton aria-label="最小化"><Icon name="min" size={14} /></CaptionButton>
        <CaptionButton aria-label="还原"><Icon name="restore" size={14} /></CaptionButton>
        <CaptionButton aria-label="关闭" $danger><Icon name="close" /></CaptionButton>
      </TitleBar>

      <MenuBar>
        <Icon name="drawing" size={15} />
        {menus.map(([text, key]) => (
          <MenuItem key={key}>{text}<small>(<u>{key}</u>)</small></MenuItem>
        ))}
        <Spacer />
        <MdiButton aria-label="最小化图形"><Icon name="min" size={10} /></MdiButton>
        <MdiButton aria-label="还原图形"><Icon name="restore" size={12} /></MdiButton>
        <MdiButton aria-label="关闭图形"><Icon name="close" size={11} /></MdiButton>
      </MenuBar>

      <ToolRow $height={25}>
        <Toolbar $end={2}>
          <Grip />
          {standardTools.map((group) => (
            <React.Fragment key={group[0]}>
              {group.map((name) => <Tool key={name} name={name} />)}
              <Rule />
            </React.Fragment>
          ))}
          <Tool name="undo" />
          <ToolButton $width={12} aria-label="undo list"><Caret /></ToolButton>
          <Tool name="redo" />
          <ToolButton $width={12} aria-label="redo list"><Caret $color="#bbb" /></ToolButton>
          <Rule />
          {viewTools.map((group) => (
            <React.Fragment key={group[0]}>
              {group.map((name) => <Tool key={name} name={name} />)}
              <Rule />
            </React.Fragment>
          ))}
          <Tool name="help" />
        </Toolbar>
        <Toolbar $end={1}>
          <Grip />
          <Tool name="textStyle" $width={18} />
          <Combo label="文字样式" options={['Standard']} width={87} gap={3} />
          <Tool name="dimStyle" $width={22} />
          <Combo label="标注样式" options={['ISO-25']} width={87} gap={3} />
          <Tool name="tableStyle" $width={22} />
          <Combo label="表格样式" options={['Standard']} width={87} />
        </Toolbar>
      </ToolRow>

      <ToolRow $height={25}>
        <Toolbar $end={4}>
          <Grip />
          <Combo label="工作空间" options={['AutoCAD 经典']} width={151} indent={6} />
          <Tool name="gear" />
          <Tool name="home" />
        </Toolbar>
        <Toolbar $end={2}>
          <Grip />
          <Tool name="layers" />
          <Combo label="图层" options={['0']} width={259} indent={1} textIndent={3}>
            {['bulb', 'sun', 'freeze', 'unlock'].map((name) => <Icon key={name} name={name} size={14} />)}
            <Icon name="swatch" size={12} />
          </Combo>
          <Tool name="layerState" />
          <Tool name="layerPrev" />
        </Toolbar>
        <Toolbar $grow>
          <Grip />
          <Combo label="颜色" options={['ByLayer']} width={130} gap={5} textIndent={1}>
            <Icon name="swatch" size={14} />
          </Combo>
          <Combo label="线型" options={['ByLayer']} width={140} gap={4} indent={4} textIndent={4}>
            <LineSample $width={51} />
          </Combo>
          <Combo label="线宽" options={['ByLayer']} width={109} gap={3} indent={4} textIndent={4}>
            <LineSample $width={29} />
          </Combo>
          <PlotStyle disabled>随颜色</PlotStyle>
        </Toolbar>
      </ToolRow>

      <Middle>
        <SideColumn $width={22}>
          <SideBar>
            <Grip $flat />
            {drawTools.map((name) => <Tool key={name} name={name} $height={19} />)}
            <ToolButton $height={19} aria-label="多行文字">A</ToolButton>
          </SideBar>
        </SideColumn>
        <Center>
          <ModelSpace />
          <TabStrip>
            {['first', 'prev', 'next', 'last'].map((name) => (
              <TabNav key={name} aria-label={name}><Icon name={name} size={10} /></TabNav>
            ))}
            {layouts.map((name) => (
              <Tab key={name} $active={layout === name} onClick={() => setLayout(name)}>
                <svg viewBox="0 0 40 12" preserveAspectRatio="none" aria-hidden="true">
                  <path d="M0 0l5 11h31L41 0" vectorEffect="non-scaling-stroke" />
                </svg>
                {name}
              </Tab>
            ))}
          </TabStrip>
        </Center>
        <SideColumn $width={24}>
          <SideBar>
            <Grip $flat />
            {modifyTools.map((name) => <Tool key={name} name={name} $height={19} />)}
          </SideBar>
          <SideBar>
            <Grip $flat />
            {['front', 'back', 'above', 'under'].map((name) => (
              <Tool key={name} name={name} $height={19} />
            ))}
          </SideBar>
        </SideColumn>
      </Middle>

      <CommandWindow>
        <CommandGrip />
        <CommandBody>
          <CommandRow $height={21} $line>
            <b>指定下一点或</b> [<b>闭合</b>(C)/<b>放弃</b>(U)]: *<b>取消</b>*
            <Spacer />
            <ScrollColumn>
              <ScrollButton $turn={180} aria-label="向上"><Chevron /></ScrollButton>
              <ScrollButton aria-label="向下"><Chevron /></ScrollButton>
            </ScrollColumn>
          </CommandRow>
          <CommandRow $height={18}>
            <label htmlFor="command"><b>命令</b>:</label>
            <input id="command" value={command} onChange={(e) => setCommand(e.target.value)} />
            <ScrollLine>
              <ScrollThumb />
              <ScrollButton $height={12} $turn={-90} aria-label="向右"><Chevron /></ScrollButton>
            </ScrollLine>
          </CommandRow>
        </CommandBody>
      </CommandWindow>

      <StatusBar>
        <Coords>{'856.7715,  880.9525 , 0.0000'}</Coords>
        {toggles.map(([name, on]) => (
          <Toggle key={name} $on={on} $latin={name[0] === 'D'} aria-pressed={on} onClick={() => flip(name)}>
            {name}
          </Toggle>
        ))}
        <Spacer />
        <StatusTray>
          <Icon name="warn" size={14} />
          <Icon name="padlock" size={14} />
        </StatusTray>
        <TrayMenu aria-label="状态栏菜单"><Caret /></TrayMenu>
        <Icon name="clean" size={14} />
      </StatusBar>

      <TaskBar>
        <StartButton><Icon name="flag" size={16} />开始</StartButton>
        <QuickLaunch>
          <Icon name="ie" size={14} />
          <Icon name="plusBall" size={14} />
          <Icon name="quad" size={14} />
          <span>»</span>
        </QuickLaunch>
        <TaskButton $active><Icon name="app" size={14} />AutoCAD 2007 - [...</TaskButton>
        <TaskButton><Icon name="paint" size={14} /><b>未命名 - 画图</b></TaskButton>
        <Spacer />
        <Ime aria-label="输入法"><Icon name="keyboard" size={14} /></Ime>
        <SystemTray>
          <TrayToggle aria-label="显示图标"><Chevron /></TrayToggle>
          <Icon name="network" size={13} />
          <Icon name="shield" size={14} />
          <time>10:38</time>
        </SystemTray>
      </TaskBar>

      <Watermark viewBox="0 0 184 90" aria-hidden="true">
        <g fill="#fff" fillOpacity=".6" stroke="#c4c2b8" strokeWidth="1.200">
          <ellipse cx="70" cy="25" rx="6" ry="8" />
          <ellipse cx="82" cy="13" rx="6" ry="9" />
          <ellipse cx="98" cy="13" rx="6" ry="9" />
          <ellipse cx="108" cy="27" rx="6" ry="8" />
          <path d="M88 27c6 0 8 6 13 11 4 4 10 9 9 14-1 7-7 7-12 6-7-1-13-1-20 0-7 1-14 0-15-6-1-5 5-10 10-14 5-5 8-11 15-11z" />
          <g fontFamily="Liberation Sans, sans-serif" fontWeight="bold">
            <text x="0" y="56" fontSize="40">Bai</text>
            <text x="77" y="53" fontSize="20">du</text>
          </g>
          <text x="117" y="55" fontSize="30" fontWeight="bold" fontFamily="Noto Sans CJK SC, sans-serif">经验</text>
        </g>
        <text x="3" y="84" fontSize="21" fill="#fff" stroke="#fff" strokeWidth=".5" fontFamily="Liberation Sans, sans-serif">
          jingyan.baidu.com
        </text>
      </Watermark>
    </Desktop>
  );
}
